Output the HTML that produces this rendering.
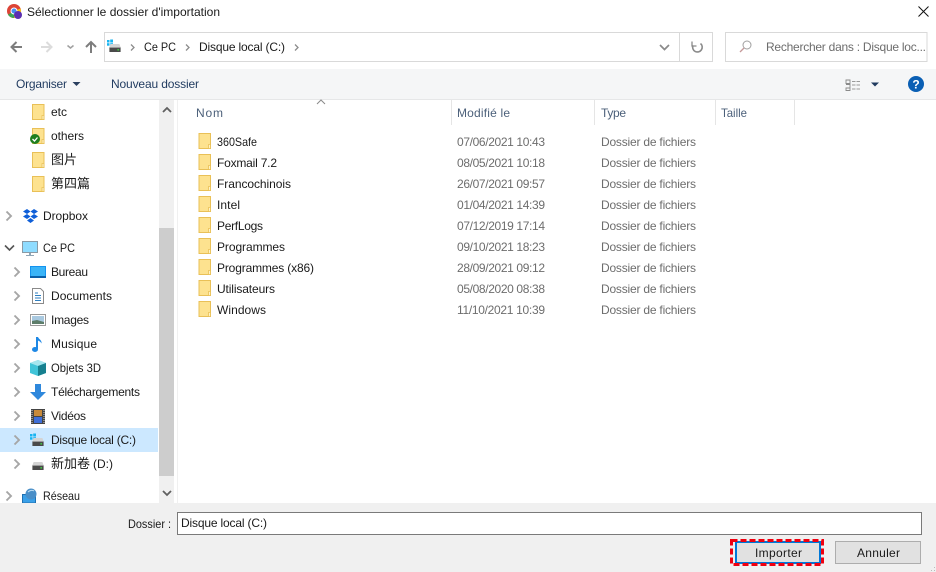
<!DOCTYPE html>
<html lang="fr"><head><meta charset="utf-8"><title>Sélectionner le dossier d'importation</title>
<style>
html,body{margin:0;padding:0;background:#fff;width:936px;height:572px;overflow:hidden}
svg{display:block}
text{font-family:"Liberation Sans","Noto Sans CJK SC",sans-serif;font-size:12px;fill:#1a1a1a;white-space:pre}
.h{fill:#4c607a}
.g{fill:#6d6d6d}
.b{fill:#1f3a5f}
.chev{fill:none;stroke:#a6a6a6;stroke-width:1.9}
</style></head><body>
<svg width="936" height="572" viewBox="0 0 936 572" xmlns="http://www.w3.org/2000/svg">
<defs>
<symbol id="f" viewBox="0 0 13 16" overflow="visible">
<path d="M.5.5h11.5v15H.5z" fill="#fde28f" stroke="#e9c057"/>
<path d="M10 11.5h2v4h-2z" fill="#fff3c4" stroke="#e9c057" stroke-width=".8"/>
</symbol>
<symbol id="d" viewBox="0 0 16 10" overflow="visible">
<path d="M1 4 2.500 0h11L15 4z" fill="#d4d4d4"/>
<rect x="1" y="4" width="14" height="6" fill="#4a4a4a"/>
<rect x="1" y="4" width="14" height="1" fill="#a0a0a0"/>
<rect x="11" y="6.500" width="2" height="1.600" fill="#3ee03e"/>
</symbol>
<symbol id="w" viewBox="0 0 6 6" overflow="visible">
<rect x="0" y="0" width="2.500" height="2.500" fill="#18b4f0"/><rect x="3.200" y="-.5" width="2.800" height="3" fill="#18b4f0"/>
<rect x="0" y="3.200" width="2.500" height="2.500" fill="#18b4f0"/><rect x="3.200" y="3.200" width="2.800" height="3" fill="#18b4f0"/>
</symbol>
</defs>

<!-- Title bar -->
<circle cx="14" cy="11" r="7" fill="#dc4437"/>
<path d="M14 11 8 14.600A7 7 0 0 0 14 18z" fill="#3aa655"/>
<path d="M14 11v7a7 7 0 0 0 6.500-9.500z" fill="#f5c518"/>
<circle cx="14" cy="11" r="3" fill="#4a8af0" stroke="#fff"/>
<circle cx="18" cy="15" r="4" fill="#5b2fb0"/>
<text x="27" y="16" textLength="193">Sélectionner le dossier d'importation</text>
<path d="M918.500 6.500 928.500 16.500M928.500 6.500 918.500 16.500" stroke="#111" stroke-width="1" fill="none"/>

<!-- Nav -->
<path d="M11 47h11M16.500 42 11.500 47l5 5" fill="none" stroke="#7d7d7d" stroke-width="2"/>
<path d="M52 47H41M46.500 42l5 5-5 5" fill="none" stroke="#dcdcdc" stroke-width="2"/>
<path d="M67.500 45.500 70.500 48 73.500 45.500" fill="none" stroke="#a0a0a0" stroke-width="1.500"/>
<path d="M91 53V42M86 47l5-5 5 5" fill="none" stroke="#7d7d7d" stroke-width="2"/>
<rect x="104.500" y="32.500" width="608" height="29" fill="#fff" stroke="#d9d9d9"/>
<path d="M679.500 33v28" stroke="#d9d9d9"/>
<use href="#w" x="107" y="40" width="6" height="6"/>
<use href="#d" x="108" y="44" width="14" height="8"/>
<path d="M131 44.500 134 47.500 131 50.500M186 44.500l3 3-3 3M295 44.500l3 3-3 3" fill="none" stroke="#8c8c8c" stroke-width="1.300"/>
<text x="144" y="51" textLength="32" lengthAdjust="spacingAndGlyphs">Ce PC</text>
<text x="199" y="51" textLength="86">Disque local (C:)</text>
<path d="M660 45 664.500 49.500 669 45" fill="none" stroke="#8a8a8a" stroke-width="1.700"/>
<path d="M700.500 43.500A4.800 4.800 0 1 1 693 45.300" fill="none" stroke="#8a8a8a" stroke-width="1.600"/>
<path d="M692 41.500v4.500h4.500" fill="none" stroke="#8a8a8a" stroke-width="1.300"/>
<rect x="725.500" y="32.500" width="201.500" height="29" fill="#fff" stroke="#d9d9d9"/>
<circle cx="747" cy="45" r="4" fill="none" stroke="#a0a0a0"/>
<path d="M744 48 740 52" stroke="#c59a9a" stroke-width="1.300"/>
<text x="766" y="51" textLength="160" class="g">Rechercher dans : Disque loc...</text>

<!-- Toolbar -->
<rect x="0" y="69" width="936" height="30" fill="#f5f6f7"/>
<rect x="0" y="99" width="936" height="1" fill="#e6e7e8"/>
<text x="16" y="88" textLength="51" class="b">Organiser</text>
<path d="M72.500 82h8l-4 4z" fill="#2a3f5f"/>
<text x="111" y="88" textLength="88" class="b">Nouveau dossier</text>
<path d="M846 80h4v3.500h-4zM846 84.500h4V88h-4M846 88h4v2.500h-4z" fill="none" stroke="#8a8a8a" stroke-width=".9"/>
<path d="M852 81.500h9M852 85h9M852 89h9" stroke="#9a9a9a" stroke-width="1" stroke-dasharray="3.500 1"/>
<path d="M871 82.500h8l-4 4z" fill="#1f3a5f"/>
<circle cx="916" cy="84" r="8" fill="#0a5fb4"/>
<text x="916" y="88.500" text-anchor="middle" style="font-size:12px;font-weight:bold;fill:#fff">?</text>

<!-- Sidebar -->
<rect x="0" y="428" width="158" height="24" fill="#cce8ff"/>
<rect x="159" y="100" width="15" height="403" fill="#f0f0f0"/>
<rect x="159" y="228" width="15" height="248" fill="#cdcdcd"/>
<path d="M163 112 167 108 171 112M163 491 167 495 171 491" fill="none" stroke="#606060" stroke-width="1.800"/>
<rect x="177" y="100" width="1" height="403" fill="#f0f0f0"/>

<use href="#f" x="32" y="104" width="13" height="16"/>
<text x="51" y="116" textLength="16">etc</text>
<use href="#f" x="32" y="128" width="13" height="16"/>
<circle cx="35" cy="139" r="5" fill="#1f7f1f"/>
<path d="M32.500 139l2 2 3-3.500" fill="none" stroke="#fff" stroke-width="1.300"/>
<text x="51" y="140" textLength="33">others</text>
<use href="#f" x="32" y="152" width="13" height="16"/>
<text x="51" y="164" style="font-size:13px">图片</text>
<use href="#f" x="32" y="176" width="13" height="16"/>
<text x="51" y="188" style="font-size:13px">第四篇</text>

<path class="chev" d="M6.500 211.500 11 216 6.500 220.500"/>
<path d="M23 211.500 27 209 30.500 211.500 27 214zM30.500 211.500 34 209 38 211.500 34 214zM23 216.500 27 214 30.500 216.500 27 219zM30.500 216.500 34 214 38 216.500 34 219zM27 220.500 30.500 218 34 220.500 30.500 223z" fill="#0f5fd8"/>
<text x="43" y="220" textLength="45">Dropbox</text>

<path d="M5 245.500 9.500 250 14 245.500" fill="none" stroke="#555" stroke-width="1.600"/>
<rect x="22.500" y="241.500" width="15" height="11" fill="#8fdcff" stroke="#8a9aa5"/>
<path d="M29 253h2v2h3v1h-8v-1h3z" fill="#8fa5b5"/>
<text x="43" y="252" textLength="32" lengthAdjust="spacingAndGlyphs">Ce PC</text>

<path class="chev" d="M14.500 267.500 19 272 14.500 276.500M14.500 291.500 19 296 14.500 300.500M14.500 315.500 19 320 14.500 324.500M14.500 339.500 19 344 14.500 348.500M14.500 363.500 19 368 14.500 372.500M14.500 387.500 19 392 14.500 396.500M14.500 411.500 19 416 14.500 420.500M14.500 435.500 19 440 14.500 444.500M14.500 459.500 19 464 14.500 468.500M6.500 491.500 11 496 6.500 500.500"/>

<rect x="30" y="266" width="16" height="12" fill="#1493ef"/>
<rect x="31" y="267" width="14" height="9" fill="#3ab4f7"/>
<rect x="30" y="276" width="16" height="2" fill="#0a5fa8"/>
<text x="51" y="276" textLength="37">Bureau</text>

<path d="M32.500 288.500h8l3 3v12h-11z" fill="#fff" stroke="#8a8a8a"/>
<path d="M35 293h3M35 295.500h6M35 298h6M35 300.500h6" stroke="#2f7fc0"/>
<text x="51" y="300" textLength="61">Documents</text>

<rect x="30.500" y="314.500" width="15" height="11" fill="#fff" stroke="#9a9a9a"/>
<rect x="32" y="316" width="12" height="8" fill="#a9c9e0"/>
<path d="M32 321l5-1 7 2v2H32z" fill="#5d7d6a"/>
<text x="51" y="324" textLength="38">Images</text>

<path d="M37 337v12" stroke="#1e88e5" stroke-width="2"/>
<ellipse cx="35" cy="349.500" rx="3" ry="2.500" fill="#1e88e5"/>
<path d="M38 337c1 2.500 4 3 3.500 6.500-1-2-2.500-2.500-3.500-3z" fill="#1e88e5"/>
<text x="51" y="348" textLength="46">Musique</text>

<path d="M30 363l8-3 8 3v10l-8 3-8-3z" fill="#40c4d8"/>
<path d="M30 363l8 3 8-3-8-3z" fill="#a5e6ee"/>
<path d="M38 366v10l8-3v-10z" fill="#16808f"/>
<text x="51" y="372" textLength="50" lengthAdjust="spacingAndGlyphs">Objets 3D</text>

<path d="M35 384h6v8h5l-8 8-8-8h5z" fill="#2f88dc"/>
<text x="51" y="396" textLength="89">Téléchargements</text>

<rect x="31" y="409" width="14" height="15" fill="#444"/>
<rect x="34" y="410" width="8" height="6" fill="#c88a3a"/>
<rect x="34" y="417" width="8" height="6" fill="#3f6fd8"/>
<path d="M32 410v13M44 410v13" stroke="#ddd" stroke-dasharray="1 1"/>
<text x="51" y="420" textLength="35">Vidéos</text>

<use href="#w" x="30" y="434" width="6" height="6"/>
<use href="#d" x="31" y="438" width="14" height="8"/>
<text x="51" y="444" textLength="85">Disque local (C:)</text>

<use href="#d" x="31" y="462" width="14" height="8"/>
<text x="51" y="468" style="font-size:13px">新加卷</text>
<text x="93" y="468" textLength="20">(D:)</text>

<rect x="22.500" y="494.500" width="13" height="8.500" fill="#3aa0e8" stroke="#2070b0"/>
<circle cx="31" cy="494" r="5.500" fill="#4a8fc8"/>
<path d="M28 492c2-2 5-2 6-1" stroke="#bfe0f5" fill="none"/>
<text x="43" y="500" textLength="37" lengthAdjust="spacingAndGlyphs">Réseau</text>

<!-- Headers -->
<path d="M317 104 321 100 325 104" fill="none" stroke="#8a8a8a" stroke-width="1"/>
<text x="196" y="117" textLength="27" class="h">Nom</text>
<text x="457" y="117" textLength="53" class="h">Modifié le</text>
<text x="601" y="117" textLength="25" class="h">Type</text>
<text x="721" y="117" textLength="26" class="h" lengthAdjust="spacingAndGlyphs">Taille</text>
<path d="M451.500 100v25M594.500 100v25M715.500 100v25M794.500 100v25" stroke="#e5e5e5"/>

<!-- Rows -->
<use href="#f" x="198.500" y="133" width="13" height="16"/><text x="217" y="146" textLength="40" lengthAdjust="spacingAndGlyphs">360Safe</text><text x="457" y="146" textLength="88" class="g">07/06/2021 10:43</text><text x="601" y="146" textLength="95" class="g">Dossier de fichiers</text>
<use href="#f" x="198.500" y="154" width="13" height="16"/><text x="217" y="167" textLength="60">Foxmail 7.2</text><text x="457" y="167" textLength="88" class="g">08/05/2021 10:18</text><text x="601" y="167" textLength="95" class="g">Dossier de fichiers</text>
<use href="#f" x="198.500" y="175" width="13" height="16"/><text x="217" y="188" textLength="74">Francochinois</text><text x="457" y="188" textLength="88" class="g">26/07/2021 09:57</text><text x="601" y="188" textLength="95" class="g">Dossier de fichiers</text>
<use href="#f" x="198.500" y="196" width="13" height="16"/><text x="217" y="209" textLength="23">Intel</text><text x="457" y="209" textLength="88" class="g">01/04/2021 14:39</text><text x="601" y="209" textLength="95" class="g">Dossier de fichiers</text>
<use href="#f" x="198.500" y="217" width="13" height="16"/><text x="217" y="230" textLength="46">PerfLogs</text><text x="457" y="230" textLength="88" class="g">07/12/2019 17:14</text><text x="601" y="230" textLength="95" class="g">Dossier de fichiers</text>
<use href="#f" x="198.500" y="238" width="13" height="16"/><text x="217" y="251" textLength="68">Programmes</text><text x="457" y="251" textLength="88" class="g">09/10/2021 18:23</text><text x="601" y="251" textLength="95" class="g">Dossier de fichiers</text>
<use href="#f" x="198.500" y="259" width="13" height="16"/><text x="217" y="272" textLength="97">Programmes (x86)</text><text x="457" y="272" textLength="88" class="g">28/09/2021 09:12</text><text x="601" y="272" textLength="95" class="g">Dossier de fichiers</text>
<use href="#f" x="198.500" y="280" width="13" height="16"/><text x="217" y="293" textLength="58">Utilisateurs</text><text x="457" y="293" textLength="88" class="g">05/08/2020 08:38</text><text x="601" y="293" textLength="95" class="g">Dossier de fichiers</text>
<use href="#f" x="198.500" y="301" width="13" height="16"/><text x="217" y="314" textLength="49">Windows</text><text x="457" y="314" textLength="88" class="g">11/10/2021 10:39</text><text x="601" y="314" textLength="95" class="g">Dossier de fichiers</text>

<!-- Footer -->
<rect x="0" y="503" width="936" height="69" fill="#f0f0f0"/>
<text x="128" y="528" textLength="43" lengthAdjust="spacingAndGlyphs">Dossier :</text>
<rect x="177.500" y="512.500" width="744" height="22" fill="#fff" stroke="#7a7a7a"/>
<text x="181" y="527" textLength="86">Disque local (C:)</text>
<rect x="736" y="542" width="84" height="21" fill="#e1e1e1" stroke="#0078d7" stroke-width="2"/>
<rect x="731.500" y="540.500" width="91" height="24" fill="none" stroke="#f00010" stroke-width="3" stroke-dasharray="6 3"/>
<text x="755" y="557" textLength="47">Importer</text>
<rect x="835.500" y="541.500" width="85" height="22" fill="#e1e1e1" stroke="#adadad"/>
<text x="857" y="557" textLength="43">Annuler</text>
<path d="M934 570h1v1h-1zM931 570h1v1h-1zM934 567h1v1h-1z" fill="#bbb"/>
</svg>
</body></html>
